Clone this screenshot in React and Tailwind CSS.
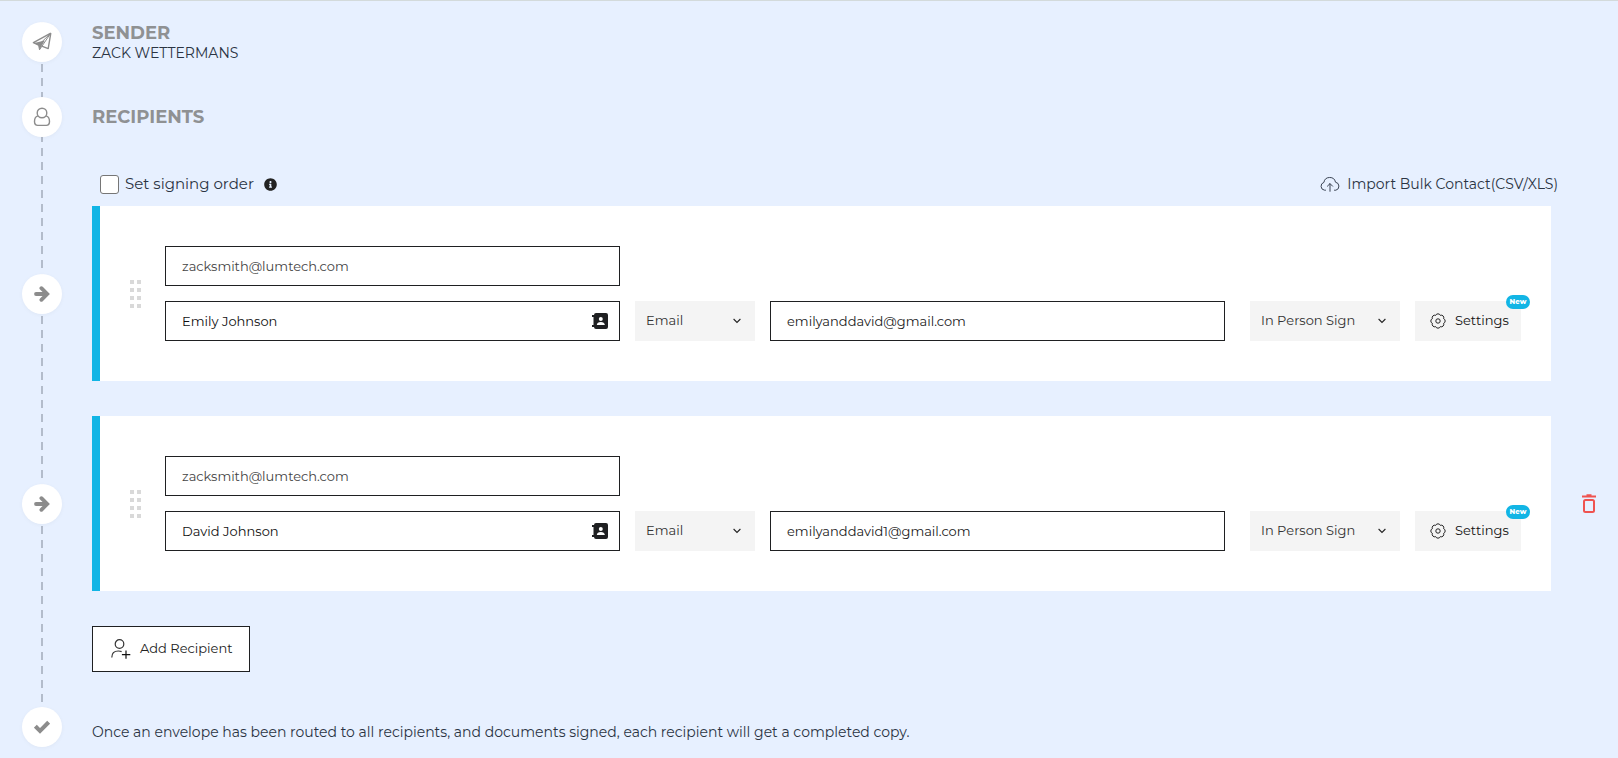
import { useState } from 'react';
import { FaInfoCircle } from 'react-icons/fa';

const initialRecipients = [
  { id: 1, sender: 'zacksmith@lumtech.com', name: 'Emily Johnson', email: 'emilyanddavid@gmail.com', removable: false },
  { id: 2, sender: 'zacksmith@lumtech.com', name: 'David Johnson', email: 'emilyanddavid1@gmail.com', removable: true },
];

function PlaneIcon() {
  return (
    <svg viewBox="0 0 20 20" className="h-5 w-5" fill="none" stroke="#8c8c8c" strokeWidth="1.4" strokeLinejoin="round">
      <path d="M18.8 1.2 1.4 10.6l5.2 2.4M9.800 14.200l6.400 2.400 2.600-15.400" />
      <path d="M2.200 10.900 12.800 8.400 9.600 14l-2 4-1-4.800z" fill="#8c8c8c" stroke="none" />
      <path d="M7.500 17.800 18.800 1.200 6.600 13z" strokeWidth="1" />
    </svg>
  );
}

function UserIcon() {
  return (
    <svg viewBox="0 0 18 20" className="h-5 w-[18px]" fill="none" stroke="#8c8c8c" strokeWidth="1.4">
      <circle cx="9" cy="6" r="4.8" />
      <path d="M5.1 8.9C2.8 9.4 1.5 11.6 1.5 14.6c0 2.3 1.3 3.8 3.3 3.8h8.4c2 0 3.3-1.5 3.3-3.8 0-3-1.3-5.2-3.6-5.7" />
    </svg>
  );
}

function ArrowIcon() {
  return (
    <svg viewBox="0 0 16 16" className="h-4 w-4" fill="none" stroke="#8c8c8c" strokeWidth="3.8" strokeLinecap="round">
      <path d="M2 8h10.5" />
      <path d="M7.4 2.2 13.2 8l-5.8 5.8" />
    </svg>
  );
}

function CheckIcon() {
  return (
    <svg viewBox="0 0 16 14" className="h-[14px] w-4" fill="none" stroke="#8c8c8c" strokeWidth="4">
      <path d="M1.4 6.2 6 10.8 14.6 2.2" />
    </svg>
  );
}

function CloudIcon() {
  return (
    <svg viewBox="0 0 20 16" className="h-4 w-5" fill="none" stroke="#3a4353" strokeWidth="1" strokeLinecap="round" strokeLinejoin="round">
      <path d="M5.5 14.2H4.6A4 4 0 0 1 3.9 6.4a5.9 5.9 0 0 1 11.6-.2 4.1 4.1 0 0 1 .4 8h-1.4" />
      <path d="M10 15.3V7.8M7.4 10.2 10 7.6l2.6 2.6" />
    </svg>
  );
}

function ContactBookIcon() {
  return (
    <svg viewBox="0 0 16 16" className="h-4 w-4">
      <path fill="#1f2022" d="M4 0h10a2 2 0 0 1 2 2v12a2 2 0 0 1-2 2H4a2 2 0 0 1-2-2H0v-2h1.5V4H0V2h2a2 2 0 0 1 2-2z" />
      <circle cx="8.8" cy="6" r="2" fill="#fff" />
      <path fill="#fff" d="M4.8 12c0-2 1.8-3 4-3s4 1 4 3z" />
    </svg>
  );
}

function GearIcon() {
  return (
    <svg viewBox="0 0 16 16" className="h-4 w-4" fill="none" stroke="#222" strokeWidth="1" strokeLinejoin="round">
      <path d="M13.61 5.68a2.5 2.5 0 0 1 0 4.64 2.5 2.5 0 0 1-3.29 3.29 2.5 2.5 0 0 1-4.64 0 2.5 2.5 0 0 1-3.29-3.29 2.5 2.5 0 0 1 0-4.64 2.5 2.5 0 0 1 3.29-3.29 2.5 2.5 0 0 1 4.64 0 2.5 2.5 0 0 1 3.29 3.29z" />
      <circle cx="8" cy="8" r="2.2" />
    </svg>
  );
}

function ChevronIcon() {
  return (
    <svg viewBox="0 0 8 6" className="pointer-events-none col-start-1 row-start-1 mr-[14px] h-[6px] w-2 justify-self-end" fill="none" stroke="#222" strokeWidth="1.1">
      <path d="M.6 1 4 4.4 7.4 1" />
    </svg>
  );
}

function AddUserIcon() {
  return (
    <svg viewBox="0 0 20 20" className="h-5 w-5" fill="none" stroke="#333" strokeWidth="1.2">
      <circle cx="8.5" cy="5" r="4.3" />
      <path d="M.8 18.5c0-4.4 2.6-6.5 6.5-6.5 1.3 0 2.3.1 3.3.6" />
      <path d="M15 11.5v8.2M10.9 15.6h8.4" stroke="#111" />
    </svg>
  );
}

function TrashIcon() {
  return (
    <svg viewBox="0 0 14 19" className="h-[19px] w-[14px]" fill="none" stroke="#ef5350" strokeWidth="2">
      <path d="M0 2.6h14M4.5 1.2h5" />
      <rect x="2" y="6" width="10" height="12" rx="1.5" />
    </svg>
  );
}

function StepCircle({ children }) {
  return (
    <div className="relative flex w-[84px] shrink-0 justify-center">
      <span className="flex h-10 w-10 items-center justify-center rounded-full bg-white shadow-[0_1px_4px_rgba(0,0,0,0.04)]">
        {children}
      </span>
    </div>
  );
}

function DragHandle() {
  return (
    <button type="button" aria-label="Reorder" className="mr-6 grid cursor-grab grid-cols-2 gap-x-[3px] gap-y-1">
      {[...Array(8)].map((_, i) => (
        <span key={i} className="h-1 w-1 bg-[#d9d9d9]" />
      ))}
    </button>
  );
}

function Dropdown({ label, options, className }) {
  return (
    <div className={`grid shrink-0 items-center ${className}`}>
      <select
        aria-label={label}
        className="col-start-1 row-start-1 h-10 w-full appearance-none rounded-none bg-[#f4f4f4] px-[11px] text-[13px] text-[#333]"
      >
        {options.map((option) => (
          <option key={option}>{option}</option>
        ))}
      </select>
      <ChevronIcon />
    </div>
  );
}

const inputClass = 'h-10 w-full min-w-0 border border-[#1f2022] bg-white px-4 text-[13px]';

function RecipientRow({ recipient, onRemove }) {
  return (
    <div className="flex items-center">
      <StepCircle><ArrowIcon /></StepCircle>
      <div className="ml-2 flex min-w-0 flex-1 items-center border-l-8 border-[#12b5e5] bg-white px-[30px] py-10">
        <DragHandle />
        <div className="grid min-w-0 flex-1 grid-cols-[1fr_auto_1fr_auto] items-center gap-[15px]">
          <input aria-label="Sender email" defaultValue={recipient.sender} className={`${inputClass} text-[#444]`} />
          <div className="col-span-3" />
          <div className="grid min-w-0 items-center">
            <input aria-label="Recipient name" defaultValue={recipient.name} className={`${inputClass} col-start-1 row-start-1 text-[#111]`} />
            <button type="button" aria-label="Contacts" className="col-start-1 row-start-1 mr-3 justify-self-end">
              <ContactBookIcon />
            </button>
          </div>
          <Dropdown label="Delivery" options={['Email', 'SMS']} className="w-[120px]" />
          <input aria-label="Recipient email" defaultValue={recipient.email} className={`${inputClass} text-[#222]`} />
          <div className="flex gap-[15px] pl-[10px]">
            <Dropdown label="Role" options={['In Person Sign', 'Needs to Sign']} className="w-[150px]" />
            <button type="button" className="relative flex h-10 w-[106px] items-center bg-[#f4f4f4] pl-[15px] text-[13px] text-[#111]">
              <GearIcon />
              <span className="ml-[9px]">Settings</span>
              <span className="absolute -top-[6px] -right-[9px] flex h-[14px] w-6 items-center justify-center rounded-full bg-[#12b5e5] text-[7px] font-extrabold text-white">
                New
              </span>
            </button>
          </div>
        </div>
      </div>
      <div className="flex w-[67px] shrink-0 justify-center pl-[9px]">
        {recipient.removable && (
          <button type="button" aria-label="Delete recipient" onClick={() => onRemove(recipient.id)}>
            <TrashIcon />
          </button>
        )}
      </div>
    </div>
  );
}

export default function App() {
  const [recipients, setRecipients] = useState(initialRecipients);

  const addRecipient = () => {
    setRecipients([...recipients, { id: Date.now(), sender: '', name: '', email: '', removable: true }]);
  };

  const removeRecipient = (id) => {
    setRecipients(recipients.filter((r) => r.id !== id));
  };

  return (
    <main className="min-h-screen border-t border-[#d3dadb] bg-[#e7f0ff] pt-[21px] font-['Montserrat','Inter',sans-serif] text-[#2b3443]">
      <div className="relative">
        {/* dashed rail behind the step circles */}
        <div className="absolute top-0 bottom-[11px] left-[41px] w-[2px] bg-[repeating-linear-gradient(to_bottom,#b3bccb_0_8px,transparent_8px_14px)]" />

        <div className="flex items-start">
          <StepCircle><PlaneIcon /></StepCircle>
          <div className="ml-2 pt-px">
            <h2 className="text-lg leading-5 font-bold text-[#8f9193]">SENDER</h2>
            <p className="text-sm leading-5">ZACK WETTERMANS</p>
          </div>
        </div>

        <div className="mt-[34px] flex items-center">
          <StepCircle><UserIcon /></StepCircle>
          <h2 className="ml-2 text-lg leading-5 font-bold text-[#8f9193]">RECIPIENTS</h2>
        </div>

        <div className="mt-[35px] mr-[60px] mb-[10px] ml-[100px] flex h-6 items-center justify-between">
          <div className="flex items-center">
            <input
              id="signing-order"
              type="checkbox"
              className="h-[19px] w-[19px] appearance-none rounded-[3px] border border-[#767676] bg-white checked:bg-[#12b5e5]"
            />
            <label htmlFor="signing-order" className="ml-[6px] text-[15px]">Set signing order</label>
            <FaInfoCircle className="ml-[10px] h-[13px] w-[13px] text-[#222]" />
          </div>
          <button type="button" className="flex items-center gap-[7px] text-sm">
            <CloudIcon />
            Import Bulk Contact(CSV/XLS)
          </button>
        </div>

        <div className="flex flex-col gap-[35px]">
          {recipients.map((r) => (
            <RecipientRow key={r.id} recipient={r} onRemove={removeRecipient} />
          ))}
        </div>

        <button
          type="button"
          onClick={addRecipient}
          className="mt-[35px] ml-[92px] flex h-[46px] items-center gap-[9px] border border-[#1f2022] bg-white pr-4 pl-[18px] text-[13px] text-[#222]"
        >
          <AddUserIcon />
          Add Recipient
        </button>

        <div className="mt-[35px] flex items-center pb-[11px]">
          <StepCircle><CheckIcon /></StepCircle>
          <p className="ml-2 pt-[10px] text-sm leading-5">
            Once an envelope has been routed to all recipients, and documents signed, each recipient will get a completed copy.
          </p>
        </div>
      </div>
    </main>
  );
}
